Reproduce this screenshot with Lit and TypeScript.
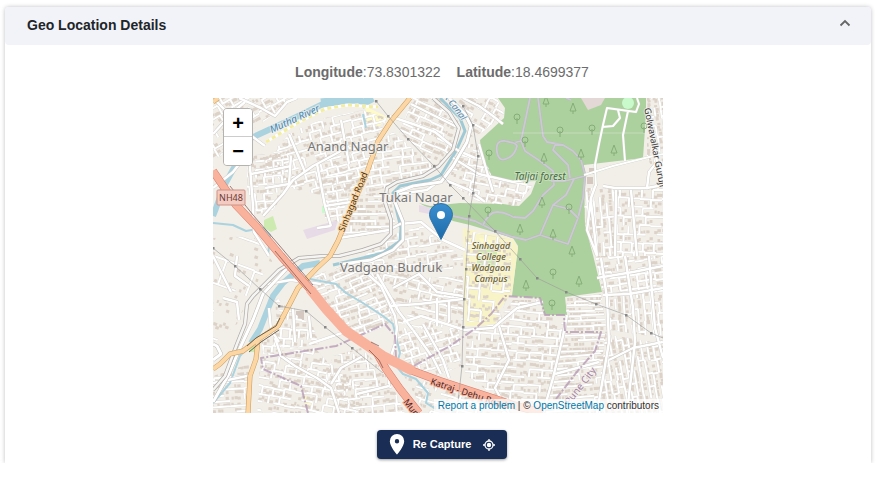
import { LitElement, html, svg, css } from "lit";
import { customElement, property, state } from "lit/decorators.js";

type Block = { area: string; angle: number; row: number; col: number; cross: number };

/** Built-up areas, each with the direction and density of its streets. */
const blocks: Block[] = [
  { area: "0,0 84,0 56,20 36,34 20,40 0,70", angle: -30, row: 9, col: 14, cross: 0.5 },
  { area: "78,34 112,20 150,12 174,20 160,50 146,92 112,98 76,90 50,66 56,58", angle: -15, row: 8, col: 11, cross: 0.7 },
  { area: "34,58 74,52 80,84 60,112 44,116 34,92", angle: -4, row: 8, col: 9, cross: 0.7 },
  { area: "108,80 140,74 136,100 126,124 112,120", angle: -8, row: 8, col: 10, cross: 0.6 },
  { area: "200,0 226,0 246,24 242,52 224,70 186,34", angle: 24, row: 7, col: 13, cross: 0.5 },
  { area: "180,34 220,68 206,80 178,88 152,96 156,70 166,44", angle: -8, row: 8, col: 10, cross: 0.6 },
  { area: "242,0 284,0 291,16 270,34 256,40 258,20", angle: 30, row: 8, col: 10, cross: 0.6 },
  { area: "250,46 266,46 280,82 322,84 304,108 266,104 232,82", angle: 12, row: 8, col: 9, cross: 0.6 },
  { area: "144,98 176,92 182,124 180,134 134,140 126,132", angle: 0, row: 6, col: 15, cross: 0.4 },
  { area: "186,134 210,128 230,146 250,158 250,170 150,178 148,160", angle: -8, row: 9, col: 11, cross: 0.5 },
  { area: "100,178 150,160 164,176 180,224 146,202 110,184", angle: -22, row: 6, col: 12, cross: 0.5 },
  { area: "152,168 178,164 202,180 250,178 250,228 206,230 182,224", angle: 12, row: 9, col: 12, cross: 0.45 },
  { area: "96,188 120,184 150,206 178,226 148,238 126,222 110,206", angle: -18, row: 7, col: 10, cross: 0.5 },
  { area: "184,230 246,230 248,268 224,278 200,270 186,256", angle: -18, row: 8, col: 8, cross: 0.6 },
  { area: "62,198 82,216 100,228 106,246 50,256 48,240 64,232", angle: 4, row: 9, col: 9, cross: 0.7 },
  { area: "48,256 102,250 120,270 148,288 152,315 44,315 46,280", angle: 10, row: 8, col: 11, cross: 0.6 },
  { area: "0,278 36,266 34,315 0,315", angle: -4, row: 6, col: 20, cross: 0.3 },
  { area: "148,250 174,276 192,315 144,315 112,280 120,258", angle: -5, row: 9, col: 12, cross: 0.5 },
  { area: "190,276 226,288 282,304 300,315 212,315", angle: 16, row: 10, col: 13, cross: 0.4 },
  { area: "254,230 282,226 300,202 326,202 332,218 352,220 350,240 334,315 284,300 252,276", angle: 4, row: 8, col: 13, cross: 0.6 },
  { area: "354,200 388,196 394,234 390,256 340,262 352,236", angle: -2, row: 5, col: 26, cross: 0.25 },
  { area: "346,256 384,252 396,262 388,315 330,315", angle: -5, row: 6, col: 22, cross: 0.4 },
  { area: "371,90 402,90 402,158 382,158 372,126", angle: 86, row: 7, col: 15, cross: 0.5 },
  { area: "402,92 450,90 450,160 402,158", angle: 2, row: 9, col: 11, cross: 0.65 },
  { area: "382,158 450,158 450,194 390,196", angle: -8, row: 7, col: 9, cross: 0.6 },
  { area: "392,196 450,190 450,240 396,232", angle: 86, row: 7, col: 11, cross: 0.55 },
  { area: "392,236 450,246 450,315 386,315", angle: 80, row: 6, col: 13, cross: 0.5 },
  { area: "434,0 450,0 450,88 434,60", angle: 82, row: 7, col: 9, cross: 0.6 },
  { area: "252,132 298,142 298,192 284,224 254,224", angle: 6, row: 11, col: 12, cross: 0.5 },
  { area: "0,140 40,138 60,164 40,190 24,226 0,246", angle: 20, row: 26, col: 30, cross: 0.3 },
];

const random = (seed: number) => () => {
  seed = (seed * 16807) % 2147483647;
  return seed / 2147483647;
};

/** Lays out the streets and houses that fill one built-up area. */
function plan(block: Block, seed: number) {
  const next = random(seed * 7919 + 13);
  const points = block.area.split(" ").map((p) => p.split(",").map(Number));
  const cx = points.reduce((s, p) => s + p[0], 0) / points.length;
  const cy = points.reduce((s, p) => s + p[1], 0) / points.length;
  const r = Math.max(...points.map((p) => Math.hypot(p[0] - cx, p[1] - cy)));
  let streets = "";
  let houses = "";
  for (let y = -r; y < r; y += block.row) {
    for (let x = -r + next() * block.col; x < r; x += block.col) {
      const dy = next() * 2 - 1;
      if (next() < 0.76) streets += `M${x.toFixed(1)} ${(y + dy).toFixed(1)}h${block.col}`;
      if (next() < block.cross) streets += `M${x.toFixed(1)} ${(y + dy).toFixed(1)}v${block.row}`;
      for (let hx = x + 1; hx < x + block.col - 1; hx += 3) {
        if (next() < 0.65) {
          const w = (2 + next() * 2).toFixed(1);
          houses += `M${hx.toFixed(1)} ${(y + 2 + next() * (block.row - 5)).toFixed(1)}h${w}v3h-${w}z`;
        }
      }
    }
  }
  return { streets, houses, place: `translate(${cx.toFixed(1)} ${cy.toFixed(1)}) rotate(${block.angle})` };
}

const plans = blocks.map((b, i) => ({ ...plan(b, i + 1), area: b.area }));

const roads = [
  "M0 90L20 74L34 56L36 36L52 48M36 56L40 108L41 134L56 158",
  "M50 118L70 96L80 82L100 68L126 54L134 48",
  "M76 36L92 74M52 90L76 86L78 58M38 76L78 68",
  "M104 66L112 108L118 128M112 108L138 104M118 128L104 130",
  "M128 22L136 66M136 50L150 52",
  "M0 0L14 14L24 30M26 0L48 10L62 18L74 4L84 0M0 36L20 14L32 4",
  "M126 140L176 132L187 126L208 124L230 142L252 152M208 124L220 134",
  "M176 18L200 26L222 34L244 52M198 6L230 22L246 30M240 60L266 76L300 84L322 80",
  "M250 0L266 8L280 18L290 26M244 52L262 60M266 46L274 74L280 94",
  "M230 80L214 92L186 96M232 82L256 92L272 104",
  "M150 172L168 188L182 218L184 230L182 246L178 258",
  "M164 176L186 214L200 232M190 224L208 218L252 232M176 208L206 206L250 201",
  "M200 232L220 260L228 276M210 226L230 262L236 280",
  "M224 200L224 228M236 202L236 224M180 190L206 176L224 194L250 198",
  "M250 232L280 230L304 210L330 204M286 228L296 262L282 290L296 315",
  "M390 88L402 90L434 90L450 87M434 90L436 74L444 64L441 48",
  "M383 86L378 100L374 132L384 158M403 92L402 158M418 92L424 158M378 104L384 158",
  "M388 160L394 200L396 244L384 315M354 217L350 238L340 280L330 315",
  "M412 158L420 210L422 244L414 315M436 158L442 230L450 260M396 262L420 250L450 244",
  "M384 180L420 174L450 168M390 197L416 196L450 190M342 276L386 264",
  "M0 158L18 194M24 158L22 178L36 188M10 200L24 204L26 222",
  "M62 240L68 258L82 268L104 280L118 290L126 315M96 246L120 238L150 228",
  "M150 258L128 270L118 286M144 296L176 288M0 285L34 278",
  "M54 186L78 182L108 186M56 210L58 232L66 244M80 210L82 244M96 218L98 240",
];
const rails = [
  "M220 0L236 14L246 30L240 52L226 68L210 78L184 84L174 90L172 104L178 122L178 136L168 146L150 152L126 158L110 158L86 160L66 172L40 198L34 206L32 226L24 246L12 278L0 292",
];
const avenues = [
  "M236 0L252 16L258 28L254 44L240 68L228 84L200 88L184 94L182 104L190 124L190 142L180 152L158 162L130 166M78 166L50 196L40 222L26 252L16 276L0 304",
  "M0 262L8 256L4 248L0 246",
];
const forestRoads = [
  "M317 0L312 24L308 43L300 45M308 43L312 53L327 63L340 73L341 87L330 97L320 113L312 120L300 119",
  "M325 0L330 38L334 44L350 47L360 53L368 62L372 77L370 100L365 120L355 146L327 137L313 142L300 139L282 133L262 123L240 118",
  "M350 47L342 47L340 52L355 67L357 80M338 83H352L372 78M361 81L353 97L340 107L327 137M340 107L356 111L365 120",
  "M284 54Q282 42 292 43Q302 44 304 48Q302 56 297 59Q286 66 284 54M270 127Q276 114 284 114T300 119",
  "M353 0L358 2M300 45L292 43",
];
const parkRoads = [
  "M383 88L382 67L386 46L390 27L394 10L423 14L426 6L424 0M415 13L410 37L412 63M389 29L400 28L407 20L405 12M371 77L400 68L440 58L450 56",
];
const motorway = ["M0 73L23 107L43 128L68 158L97 191L113 211L133 233L170 258L200 273L227 283L267 296L300 307L330 315", "M162 252L173 271L187 291L206 315"];
const primary = [
  "M197 0L178 23L165 43L153 77L137 113L125 143L117 158L103 171L85 190L72 215L65 228L43 243L30 253L17 256L7 266L0 271",
  "M45 242L43 261L37 278L35 315",
  "M0 4L5 0",
];
const river = "M150 0L112 5L77 22L38 40L22 68L11 88L2 113L0 118M107 165L90 168L70 185L60 198L47 231L38 245";
const streams = [
  "M227 0L247 20L252 33L243 53L228 77L217 82L187 88L180 95L183 110L188 130L187 143L170 155L150 160L120 167",
  "M97 181L123 186L133 195L150 205L170 218L180 226L187 255L183 268L190 276L203 281L215 295L213 305L223 311",
  "M0 125L20 127L33 133L50 130L57 137L55 158M38 245L27 258L17 285L0 305M150 16L153 30",
];
const boundary =
  "M95 315L88 288L50 271L48 260L123 248L150 236L172 226L182 238L183 261L197 270L237 248L263 230L278 216L292 198L327 200L332 217H351L352 234H388L382 253L363 275L343 301";
const powerLines = [
  [[163, 3], [175, 18], [195, 41], [221, 68], [237, 87], [250, 100], [282, 133], [307, 161], [324, 180], [353, 194], [383, 206], [413, 217], [438, 235], [450, 240]],
  [[250, 8], [260, 27], [265, 58], [260, 95], [256, 118], [253, 171], [251, 201], [250, 229], [249, 268], [245, 304]],
  [[0, 150], [22, 168], [47, 191], [66, 208], [93, 213], [112, 229], [139, 250], [170, 275]],
];
const broadleaf = [[276, 56], [304, 20], [312, 43], [347, 33], [379, 31], [431, 29], [275, 113], [356, 110], [340, 175], [339, 206]];
const conifers = [[333, 4], [360, 11], [331, 61], [368, 57], [401, 53], [329, 105], [307, 132], [340, 137], [359, 154], [313, 188], [366, 184]];

const mapArt = svg`
  <rect width="450" height="315" fill="#f2efe9"></rect>
  <path fill="#add19e" d="M285 0L292 10L291 20L278 32L267 42L268 53L274 70L280 80L292 84L323 83L318 96L306 108L290 106L247 105L217 108L206 105L240 123L257 127L300 140L305 148L299 198L327 200L332 217H354L352 199L389 194L380 157L372 127L371 67L430 60L433 17V0Z"></path>
  <path fill="#e3d8d6" d="M368 0L375 12L388 7L392 0Z"></path>
  <path fill="#f8f4c8" d="M250 130L300 141L305 150L299 195L285 213L283 228H252Z"></path>
  <path fill="#fffbc8" d="M266 140L288 144L290 156L272 152ZM90 297L98 300L100 308L91 305ZM152 8L176 20L166 28L154 24Z"></path>
  <path fill="#cdebb0" d="M51 122L60 118L64 131L58 134L51 130ZM36 248h8v6h-8zM264 146h20v22h-20z"></path>
  <path fill="#c8facc" d="M109 108h5v7h-5z"></path><circle cx="415" cy="5" r="6" fill="#c8facc"></circle>
  <path fill="#e8dbe8" d="M90 132L125 122L122 132L94 141ZM206 107L220 110L216 116L206 114Z"></path>
  <path fill="#d4c8c0" d="M83 213h8v10h-8zM374 79h6v7h-6zM376 70h5v6h-5z"></path>
  ${plans.map(
    (p, i) => svg`
      <clipPath id=${"area" + i}><polygon points=${p.area}></polygon></clipPath>
      <g clip-path=${`url(#area${i})`} fill="none">
        <path transform=${p.place} d=${p.houses} fill="#dcd2c8"></path>
        <path transform=${p.place} d=${p.streets} stroke="#d9d5d0" stroke-width="2.8"></path>
        <path transform=${p.place} d=${p.streets} stroke="#fff" stroke-width="2"></path>
      </g>`
  )}
  <g fill="none" stroke-linejoin="round">
    <path d=${river} stroke="#aad3df" stroke-width="6"></path>
    <path d="M108 5L150 0" stroke="#aad3df" stroke-width="9"></path>
    <path d="M148 8L152 4L160 0" stroke="#aad3df" stroke-width="8"></path>
    <path d="M53 44L86 24L112 11L134 7L165 9" stroke="#fff" stroke-width="3"></path>
    <path d="M53 44L86 24L112 11L134 7L165 9" stroke="#f3eda0" stroke-width="3" stroke-dasharray="4 3"></path>
    <path d=${streams[0]} stroke="#9fc9d4" stroke-width="3"></path>
    ${streams.slice(1).map((d) => svg`<path d=${d} stroke="#aad3df" stroke-width="2"></path>`)}
    ${roads.map((d) => svg`<path d=${d} stroke="#cfccc8" stroke-width="3.4"></path>`)}
    ${roads.map((d) => svg`<path d=${d} stroke="#fff" stroke-width="2.5"></path>`)}
    ${avenues.map((d) => svg`<path d=${d} stroke="#bfbcb8" stroke-width="4"></path><path d=${d} stroke="#fff" stroke-width="3"></path>`)}
    ${rails.map((d) => svg`<path d=${d} stroke="#aeaaa6" stroke-width="4"></path><path d=${d} stroke="#f6f5f3" stroke-width="2.600"></path>`)}
    ${forestRoads.map((d) => svg`<path d=${d} stroke="#b3bdb0" stroke-width="2.600"></path><path d=${d} stroke="#cdc8d6" stroke-width="1.800"></path>`)}
    ${parkRoads.map((d) => svg`<path d=${d} stroke="#c6cfc0" stroke-width="2.600"></path><path d=${d} stroke="#fff" stroke-width="2"></path>`)}
    <path d="M300 35H433M150 265.500H200" stroke="#fff" stroke-width="1" opacity=".3"></path>
    <path d=${boundary} stroke="#b79bb5" stroke-width="2" stroke-dasharray="9 2 2 2" opacity=".8"></path>
    ${primary.map((d) => svg`<path d=${d} stroke="#c99a55" stroke-width="5"></path>`)}
    ${primary.map((d) => svg`<path d=${d} stroke="#fcd6a4" stroke-width="4"></path>`)}
    <path d="M34 248L43 240L63 228L67 220M36 254L48 244L66 232" stroke="#6f5f49" stroke-width="1"></path>
    ${motorway.map((d) => svg`<path d=${d} stroke="#dc7a68" stroke-width="8"></path>`)}
    <path d="M97 191L113 211L133 233L170 258L200 273" stroke="#f9b29c" stroke-width="10"></path>
    ${motorway.map((d) => svg`<path d=${d} stroke="#f9b29c" stroke-width="7"></path>`)}
    <path d="M17 88L40 117L66 147L100 187M156 252L166 262L170 270M62 153L98 196M166 248L158 244" stroke="#7a5048" stroke-width="1" opacity=".7"></path>
  </g>
  ${powerLines.map(
    (line) => svg`
      <polyline points=${line.map((p) => p.join()).join(" ")} fill="none" stroke="#9a9a9a" stroke-width="1" opacity=".6"></polyline>
      ${line.slice(0, -1).map((p) => svg`<rect x=${p[0] - 1} y=${p[1] - 1} width="2.500" height="2.500" fill="#888"></rect>`)}`
  )}
  <g fill="none" stroke="#86ad79" stroke-width="1">
    ${broadleaf.map(([x, y]) => svg`<path d=${`M${x} ${y + 6}v-6M${x - 3} ${y - 1}a3 3 0 1 1 6 0a3 3 0 1 1-6 0`}></path>`)}
    ${conifers.map(([x, y]) => svg`<path d=${`M${x} ${y + 5}v-3M${x} ${y - 6}l3 8h-6z`}></path>`)}
  </g>
  <rect x="4" y="92" width="28" height="15" rx="1" fill="#f3cbc1" stroke="#cf9287"></rect>
  <g class="label" text-anchor="middle">
    <text class="shield" x="18" y="103" font-size="9" fill="#6c3a35">NH48</text>
    <g font-size="13" fill="#777">
      <text x="135" y="53">Anand Nagar</text>
      <text x="203" y="104">Tukai Nagar</text>
      <text x="178" y="174">Vadgaon Budruk</text>
    </g>
    <g class="green"><text x="327" y="82" font-size="10" font-style="italic" fill="#4b6b46">Taljai forest</text></g>
    <g font-size="9" font-style="italic" fill="#6b6022" font-weight="500">
      <text x="278" y="151">Sinhagad</text><text x="278" y="162">College</text>
      <text x="278" y="173">Wadgaon</text><text x="278" y="184">Campus</text>
    </g>
    <text transform="translate(83 24) rotate(-25)" font-size="10" font-style="italic" fill="#4884b0">Mutha River</text>
    <text transform="translate(240 11) rotate(52)" font-size="9" font-style="italic" fill="#4884b0">k Canal</text>
    <g class="orange"><text transform="translate(143 105) rotate(-68)" font-size="9" fill="#4a3518">Sinhagad Road</text></g>
    <text transform="translate(439 50) rotate(79)" font-size="9" fill="#333">Golwavalkar Guruji</text>
    <text transform="translate(370 290) rotate(-52)" font-size="10" fill="#a583a3">Pune City</text>
    <g class="red" text-anchor="start" font-size="9" fill="#4b241f">
      <text transform="translate(217 286) rotate(18)">Katraj - Dehu Road</text>
      <text transform="translate(190 304) rotate(52)">Mumbai</text>
    </g>
  </g>`;

@customElement("geo-map")
export class GeoMap extends LitElement {
  static styles = css`
    :host { display: block; position: relative; overflow: hidden; aspect-ratio: 10 / 7; background: #f2efe9; }
    .tiles { display: block; width: 100%; height: 100%; }
    .label { font-family: "Noto Sans", sans-serif; stroke: rgba(246, 243, 238, 0.7); stroke-width: 2px; paint-order: stroke; }
    .shield { stroke: none; }
    .green { stroke: rgba(207, 229, 198, 0.7); }
    .orange { stroke: #fcd6a4; }
    .red { stroke: #f9b29c; }
    .zoom { position: absolute; left: 10px; top: 10px; display: flex; flex-direction: column; border: 1px solid #b5b3af; border-radius: 4px; overflow: hidden; }
    .zoom button { width: 28px; height: 28px; padding: 0; border: 0; background: #fff; color: #000; font: bold 20px/28px "Liberation Sans", Arial, sans-serif; cursor: pointer; }
    .zoom button:first-child { border-bottom: 1px solid #ccc; }
    .pin { position: absolute; left: 216px; top: 105px; width: 24px; height: 37px; }
    .credit { position: absolute; right: 0; bottom: 0; padding: 0 4px; background: rgba(255, 255, 255, 0.75); color: #333; font: 10px/14px "Liberation Sans", Arial, sans-serif; white-space: nowrap; }
    a { color: #0078a8; text-decoration: none; }
  `;
  render() {
    return html`
      <svg class="tiles" viewBox="0 0 450 315" preserveAspectRatio="xMidYMid slice" role="img" aria-label="Map">${mapArt}</svg>
      <svg class="pin" viewBox="0 0 24 37" aria-hidden="true">
        <defs><linearGradient id="blue" x2="0" y2="1"><stop stop-color="#3b8fd0"></stop><stop offset="1" stop-color="#1d6aa8"></stop></linearGradient></defs>
        <path d="M12 36.500L3 19Q.5 15 .5 11.500A11.500 11 0 0 1 23.500 11.500Q23.500 15 21 19Z" fill="url(#blue)" stroke="#2e73a8"></path>
        <circle cx="12" cy="12" r="4" fill="#fff"></circle>
      </svg>
      <div class="zoom"><button aria-label="Zoom in">+</button><button aria-label="Zoom out">−</button></div>
      <div class="credit"><a href="#report">Report a problem</a> | © <a href="#osm">OpenStreetMap</a> contributors</div>`;
  }
}

@customElement("app-root")
export class AppRoot extends LitElement {
  @property() longitude = "73.8301322";
  @property() latitude = "18.4699377";
  @state() private open = true;

  static styles = css`
    :host { display: block; background: #fff; font-family: "Liberation Sans", Arial, sans-serif; }
    .clip { overflow: hidden; padding: 7px 4px 0 5px; }
    .card { border-radius: 4px 4px 0 0; box-shadow: 0 0 4px rgba(0, 0, 0, 0.25); background: #fff; }
    .head { display: flex; align-items: center; justify-content: space-between; width: 100%; height: 38px; padding: 0 20px 2px 22px; border: 0; border-radius: 4px; background: #f2f3f8; color: #212529; font: bold 14px/20px "Liberation Sans", Arial, sans-serif; text-align: left; cursor: pointer; }
    .chevron { width: 12px; height: 12px; margin-bottom: 4px; }
    .body { display: flex; flex-direction: column; align-items: center; padding: 17px 16px 4px; }
    .coords { display: flex; gap: 16px; margin: 0; padding-left: 8px; color: #6c6c6c; font-size: 14px; line-height: 20px; }
    geo-map { width: 450px; max-width: 100%; margin: 16px 0 17px; }
    .action { padding-left: 8px; }
    .capture { display: flex; align-items: center; height: 29px; padding: 0 12px; border: 0; border-radius: 4px; background: #192d55; color: #fff; box-shadow: 0 1px 3px rgba(0, 0, 0, 0.4); font: bold 11px/16px "Liberation Sans", Arial, sans-serif; cursor: pointer; }
    .place { width: 16px; height: 22px; margin: 0 8px 2px 0; }
    .name { padding-bottom: 2px; }
    .target { width: 12px; height: 12px; margin-left: 12px; }
  `;
  render() {
    return html`
      <div class="clip">
        <section class="card">
          <button class="head" aria-expanded=${this.open} @click=${() => (this.open = !this.open)}>
            Geo Location Details
            <svg class="chevron" viewBox="0 0 12 12" fill="none" stroke="#666" stroke-width="1.800" aria-hidden="true"><path d="M1.500 8.500L6 4L10.500 8.500"></path></svg>
          </button>
          ${this.open
            ? html`<div class="body">
                <p class="coords">
                  <span><b>Longitude</b>:${this.longitude}</span>
                  <span><b>Latitude</b>:${this.latitude}</span>
                </p>
                <geo-map></geo-map>
                <div class="action">
                  <button class="capture">
                    <svg class="place" viewBox="0 0 16 22" aria-hidden="true"><path fill="#fff" fill-rule="evenodd" d="M8 1A7.200 7.200 0 0 0 .8 8.200C.8 13.500 8 21.500 8 21.500S15.200 13.500 15.200 8.200A7.200 7.200 0 0 0 8 1ZM8 6A2.200 2.200 0 1 1 8 10.400A2.200 2.200 0 0 1 8 6Z"></path></svg>
                    <span class="name">Re Capture</span>
                    <svg class="target" viewBox="0 0 12 12" fill="none" stroke="#fff" aria-hidden="true"><circle cx="6" cy="6" r="4" stroke-width="1.300"></circle><path stroke-width="1.300" d="M6 0v2M6 10v2M0 6h2M10 6h2"></path><circle cx="6" cy="6" r="2.200" fill="#fff" stroke="none"></circle></svg>
                  </button>
                </div>
              </div>`
            : null}
        </section>
      </div>`;
  }
}
